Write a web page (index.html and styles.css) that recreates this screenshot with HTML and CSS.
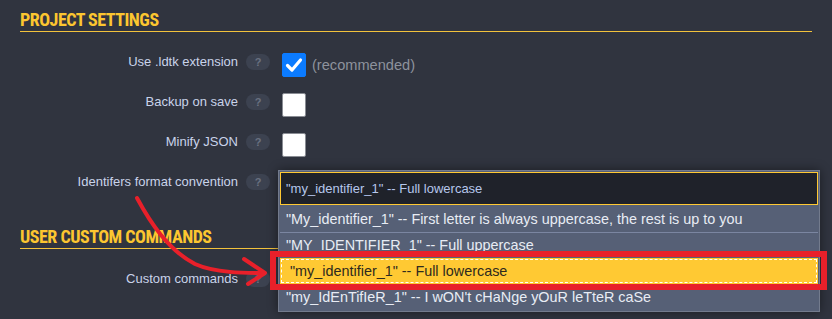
FILE: index.html
```html
<!DOCTYPE html>
<html lang="en">
<head>
    <meta charset="UTF-8">
    <meta name="viewport" content="width=device-width, initial-scale=1.0">
    <title>Project settings</title>
    <link rel="stylesheet" href="styles.css">
</head>
<body>
    <div class="page">
        <h2 class="section-title">PROJECT SETTINGS</h2>

        <div class="row">
            <span class="label">Use .ldtk extension</span>
            <span class="help">?</span>
            <div class="control">
                <span class="checkbox checked">
                    <svg viewBox="0 0 24 24" width="24" height="24"><path d="M5.5 12.5 L10 17 L18.5 7" fill="none" stroke="#fff" stroke-width="3.2" stroke-linecap="round" stroke-linejoin="round"/></svg>
                </span>
                <span class="note">(recommended)</span>
            </div>
        </div>

        <div class="row">
            <span class="label">Backup on save</span>
            <span class="help">?</span>
            <div class="control"><span class="checkbox"></span></div>
        </div>

        <div class="row">
            <span class="label">Minify JSON</span>
            <span class="help">?</span>
            <div class="control"><span class="checkbox"></span></div>
        </div>

        <div class="row">
            <span class="label">Identifers format convention</span>
            <span class="help">?</span>
            <div class="control">
                <div class="dropdown">
                    <div class="dropdown-value">"my_identifier_1" -- Full lowercase</div>
                    <div class="option">"My_identifier_1" -- First letter is always uppercase, the rest is up to you</div>
                    <div class="option">"MY_IDENTIFIER_1" -- Full uppercase</div>
                    <div class="option selected">"my_identifier_1" -- Full lowercase</div>
                    <div class="option">"my_IdEnTifIeR_1" -- I wON't cHaNge yOuR leTteR caSe</div>
                </div>
            </div>
        </div>

        <h2 class="section-title">USER CUSTOM COMMANDS</h2>

        <div class="row">
            <span class="label">Custom commands</span>
            <span class="help">?</span>
            <div class="control"></div>
        </div>
    </div>

    <!-- annotation drawn over the screenshot -->
    <svg class="annotation" width="832" height="319" viewBox="0 0 832 319">
        <rect x="273" y="254" width="551" height="33" fill="none" stroke="#e8202a" stroke-width="6"/>
        <path d="M137 198 C150 222 168 250 195 264 C215 273 245 273 264 273" fill="none" stroke="#e8202a" stroke-width="4" stroke-linecap="round"/>
        <path d="M244 259 L265 273 L248 284" fill="none" stroke="#e8202a" stroke-width="4" stroke-linecap="round" stroke-linejoin="round"/>
    </svg>
</body>
</html>
```

FILE: styles.css
```css
* {
    margin: 0;
    padding: 0;
    box-sizing: border-box;
}

body {
    position: relative;
    background: #30343f;
    font-family: "Liberation Sans", Arial, sans-serif;
    overflow: hidden;
    height: 319px;
}

.page {
    padding: 10px 20px 0 20px;
}

.section-title {
    font-family: "Liberation Sans Narrow", "Roboto Condensed", Roboto, sans-serif;
    font-weight: 700;
    font-size: 18px;
    line-height: 20px;
    letter-spacing: -0.5px;
    height: 22px;
    color: #fcc630;
    border-bottom: 1px solid #f2c23c;
    padding-bottom: 1px;
    margin-bottom: 21px;
}

.row + .section-title {
    margin-top: 14px;
}

.row {
    display: flex;
    align-items: flex-start;
    height: 40px;
}

.label {
    width: 218px;
    text-align: right;
    font-size: 13px;
    line-height: 16px;
    margin-top: 1px;
    color: #c9d3ea;
}

.help {
    width: 24px;
    height: 16px;
    margin-top: 1px;
    margin-left: 8px;
    border-radius: 8px;
    background: #3c4250;
    color: #6a7180;
    font-size: 11px;
    font-weight: 700;
    line-height: 16px;
    text-align: center;
}

.control {
    position: relative;
    margin-left: 12px;
    display: flex;
    align-items: center;
}

.checkbox {
    display: block;
    width: 24px;
    height: 24px;
    background: #fff;
    border: 1px solid #8a8d94;
    border-radius: 2px;
}

.checkbox.checked {
    background: #0b7bff;
    border-color: #0b7bff;
}

.checkbox svg {
    display: block;
    margin: -1px;
}

.note {
    margin-left: 6px;
    font-size: 14.6px;
    color: #8d929c;
}

.dropdown {
    position: absolute;
    top: -3px;
    left: -4px;
    width: 542px;
    border: 1px solid #737b8d;
    padding: 1px;
    background: #566076;
    box-shadow: 0 0 10px rgba(0, 0, 0, 0.45);
    z-index: 2;
}

.dropdown-value {
    height: 33px;
    margin-bottom: 1px;
    border: 1px solid #ffc933;
    background: #1f222a;
    padding-left: 5px;
    font-size: 13px;
    line-height: 31px;
    color: #b6c7ec;
    white-space: nowrap;
}

.option {
    height: 26px;
    padding-left: 6px;
    font-size: 14.4px;
    line-height: 26px;
    color: #e8ecf4;
    white-space: nowrap;
}

.option + .option {
    border-top: 1px solid #7b86a1;
    line-height: 25px;
}

.option.selected {
    background: #ffc933;
    color: #2e2a1e;
    border-top-color: #ffc933;
    outline: 1px dashed #fff;
    outline-offset: -2px;
    padding-left: 10px;
}

.annotation {
    position: absolute;
    top: 0;
    left: 0;
    pointer-events: none;
    z-index: 5;
}
```
